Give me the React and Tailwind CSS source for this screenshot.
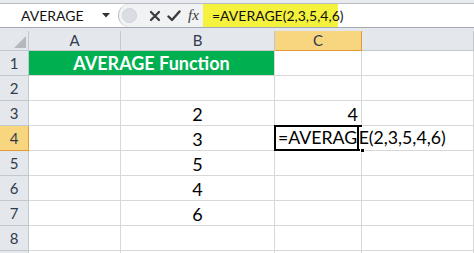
import React from 'react'

const cols = ['A', 'B', 'C', '']
const bVals = { 3: '2', 4: '3', 5: '5', 6: '4', 7: '6' }

function RowHead({ n, active }) {
  return (
    <div
      className={
        active
          ? 'flex items-center justify-center border-r border-b border-[#e29a35] bg-[#f8d57f] text-[15px] text-[#2f3b4c]'
          : 'flex items-center justify-center border-r border-b border-[#c3c8ce] bg-[#e4e8ec] text-[15px] text-[#2f3b4c]'
      }
    >
      {n}
    </div>
  )
}

function Cell({ children, className = '' }) {
  return <div className={'flex items-end border-r border-b border-[#d8d8d8] bg-white text-[18px] leading-[22px] text-black ' + className}>{children}</div>
}

export default function App() {
  const rows = [1, 2, 3, 4, 5, 6, 7, 8, '']
  return (
    <div className="w-[474px] h-[253px] overflow-hidden bg-[#e3e6ea] font-['Lato',sans-serif]">
      <div className="h-[4px] bg-[#e8eaed] border-b border-[#b7bdc5]"></div>

      <div className="flex h-[24px] border-b border-[#a3aab3] bg-white">
        <div className="w-[118px] flex items-center pl-[21px] text-[14px] text-[#111]">
          <span className="flex-1">AVERAGE</span>
          <svg width="8" height="5" viewBox="0 0 8 5" className="mr-[8px]">
            <path d="M0 0 L8 0 L4 4.5 Z" fill="#333" />
          </svg>
        </div>
        <div className="w-[85px] flex items-center rounded-l-[12px] border-l border-[#b9bfc7] bg-[#f1f2f4]">
          <div className="ml-[3px] w-[15px] h-[15px] rounded-full bg-[#dadde1] border border-[#cfd3d8]"></div>
          <svg width="12" height="12" viewBox="0 0 12 12" className="ml-[12px]">
            <path d="M2 2 L10 10 M10 2 L2 10" stroke="#3a3a3a" strokeWidth="2.2" strokeLinecap="round" />
          </svg>
          <svg width="14" height="12" viewBox="0 0 14 12" className="ml-[6px]">
            <path d="M1.5 6.5 L5 10 L12.5 1.5" stroke="#3a3a3a" strokeWidth="2.4" fill="none" strokeLinecap="round" strokeLinejoin="round" />
          </svg>
          <span className="ml-[7px] font-['Liberation_Serif',serif] italic text-[15px] text-[#3a3a3a]">fx</span>
        </div>
        <div className="flex-1 flex">
          <div className="w-[135px] bg-[#f4f23c] flex items-center pl-[9px] text-[14px] text-[#111]">=AVERAGE(2,3,5,4,6)</div>
        </div>
      </div>

      <div className="h-[3px]"></div>

      <div className="grid grid-cols-[29px_92px_154px_87px_1fr] grid-rows-[20px_repeat(9,25px)] bg-white">
        <div className="relative border-r border-b border-[#c3c8ce] bg-[#e4e8ec]">
          <svg width="12" height="12" viewBox="0 0 12 12" className="absolute right-[2px] bottom-[2px]">
            <path d="M12 0 L12 12 L0 12 Z" fill="#b5b9bf" />
          </svg>
        </div>
        {cols.map((c, i) => (
          <div
            key={i}
            className={
              c === 'C'
                ? 'flex items-center justify-center border-r border-b border-[#e29a35] bg-[#f8d57f] text-[15px] text-[#2f3b4c]'
                : 'flex items-center justify-center border-r border-b border-[#c3c8ce] bg-[#e4e8ec] text-[15px] text-[#2f3b4c]'
            }
          >
            {c}
          </div>
        ))}

        {rows.map((r, i) => (
          <React.Fragment key={i}>
            <RowHead n={r} active={r === 4} />
            {r === 1 ? (
              <div className="col-span-2 flex items-center justify-center border-r border-b border-[#d8d8d8] bg-[#00b050] text-[18px] font-bold text-white">
                AVERAGE Function
              </div>
            ) : (
              <>
                <Cell />
                <Cell className="justify-center">{bVals[r]}</Cell>
              </>
            )}
            {r === 3 ? (
              <Cell className="justify-end pr-[3px]">4</Cell>
            ) : r === 4 ? (
              <div className="relative z-10 border-l-[2px] border-t-[2px] border-b-[2px] border-black bg-white -ml-[1px] -mt-[1px]">
                <div className="absolute left-[2px] bottom-[0px] flex items-end whitespace-nowrap text-[17.7px] leading-[22px] text-black">
                  <span>=AVERAG</span>
                  <span className="w-[1.5px] h-[23px] bg-black"></span>
                  <span>E(2,3,5,4,6)</span>
                </div>
                <div className="absolute -right-[3px] -bottom-[4px] w-[5px] h-[5px] bg-black border border-white"></div>
              </div>
            ) : (
              <Cell />
            )}
            <Cell />
          </React.Fragment>
        ))}
      </div>
    </div>
  )
}
